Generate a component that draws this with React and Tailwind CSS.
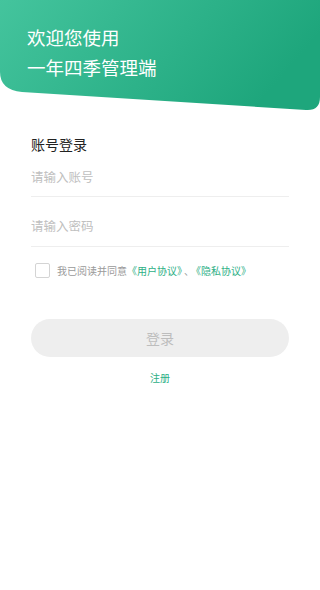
export default function App() {
  return (
    <div className="min-h-[590px] w-[320px] bg-white" style={{ fontFamily: '"Noto Sans CJK SC", "Noto Sans", sans-serif' }}>
      <header className="relative h-[112px]">
        <svg className="absolute inset-0" width="320" height="112" viewBox="0 0 320 112">
          <defs>
            <linearGradient id="hg" x1="0" y1="0" x2="1" y2="0.3">
              <stop offset="0" stopColor="#44c49d" />
              <stop offset="1" stopColor="#1ea67c" />
            </linearGradient>
          </defs>
          <path d="M0 0 H320 V97 Q320 111 306 110 L22 92 Q0 90 0 72 Z" fill="url(#hg)" />
        </svg>
        <div className="relative flex flex-col gap-[6px] px-[27px] pt-[25px] text-[18.5px] leading-[24px] text-white">
          <p>欢迎您使用</p>
          <p>一年四季管理端</p>
        </div>
      </header>

      <main className="px-[31px] pt-[22px]">
        <h2 className="text-[14px] leading-[20px] text-[#222]">账号登录</h2>
        <div className="border-b border-[#eeeeee] pt-[14px] pb-[10px] text-[12.5px] leading-[18px] text-[#c0c0c0]">请输入账号</div>
        <div className="border-b border-[#eeeeee] pt-[20px] pb-[11px] text-[12.5px] leading-[18px] text-[#c0c0c0]">请输入密码</div>
        <div className="flex items-center pt-[16px] pl-[4px]">
          <span className="h-[15px] w-[15px] rounded-[2px] border border-[#d4d4d4]" />
          <p className="ml-[7px] text-[10px] leading-[14px] text-[#9a9a9a]">
            我已阅读并同意<span className="text-[#2daf86]">《用户协议》</span><span className="mx-[2px]">、</span><span className="text-[#2daf86]">《隐私协议》</span>
          </p>
        </div>
        <button className="mt-[41px] flex h-[38px] w-full items-center justify-center rounded-full bg-[#eeeeee] text-[14px] text-[#bdbdbd]">
          登录
        </button>
        <p className="mt-[14px] text-center text-[10px] leading-[14px] text-[#2daf86]">注册</p>
      </main>
    </div>
  )
}
